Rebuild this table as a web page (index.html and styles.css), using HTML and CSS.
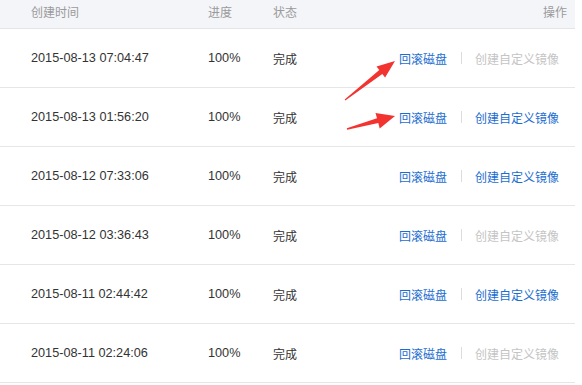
FILE: index.html
```html
<!DOCTYPE html>
<html>
<head>
<meta charset="utf-8">
<link rel="stylesheet" href="styles.css">
</head>
<body>
<div class="wrap">
  <div class="table">
    <div class="row head">
      <div class="c-date">创建时间</div>
      <div class="c-prog">进度</div>
      <div class="c-stat">状态</div>
      <div class="c-act head-act">操作</div>
    </div>
    <div class="row">
      <div class="c-date num">2015-08-13 07:04:47</div>
      <div class="c-prog num">100%</div>
      <div class="c-stat">完成</div>
      <div class="c-act"><a class="link">回滚磁盘</a><span class="sep"></span><a class="link wide off">创建自定义镜像</a></div>
    </div>
    <div class="row">
      <div class="c-date num">2015-08-13 01:56:20</div>
      <div class="c-prog num">100%</div>
      <div class="c-stat">完成</div>
      <div class="c-act"><a class="link">回滚磁盘</a><span class="sep"></span><a class="link wide">创建自定义镜像</a></div>
    </div>
    <div class="row">
      <div class="c-date num">2015-08-12 07:33:06</div>
      <div class="c-prog num">100%</div>
      <div class="c-stat">完成</div>
      <div class="c-act"><a class="link">回滚磁盘</a><span class="sep"></span><a class="link wide">创建自定义镜像</a></div>
    </div>
    <div class="row">
      <div class="c-date num">2015-08-12 03:36:43</div>
      <div class="c-prog num">100%</div>
      <div class="c-stat">完成</div>
      <div class="c-act"><a class="link">回滚磁盘</a><span class="sep"></span><a class="link wide off">创建自定义镜像</a></div>
    </div>
    <div class="row">
      <div class="c-date num">2015-08-11 02:44:42</div>
      <div class="c-prog num">100%</div>
      <div class="c-stat">完成</div>
      <div class="c-act"><a class="link">回滚磁盘</a><span class="sep"></span><a class="link wide">创建自定义镜像</a></div>
    </div>
    <div class="row">
      <div class="c-date num">2015-08-11 02:24:06</div>
      <div class="c-prog num">100%</div>
      <div class="c-stat">完成</div>
      <div class="c-act"><a class="link">回滚磁盘</a><span class="sep"></span><a class="link wide off">创建自定义镜像</a></div>
    </div>
  </div>
  <svg class="arrows" width="582" height="385" viewBox="0 0 582 385">
    <polygon fill="#f2332f" points="344.7,99.6 379.3,70.1 376.5,66.6 395,61 385.1,77.6 382.3,74.1 345.3,100.4"/>
    <polygon fill="#f2332f" points="346.8,128.3 377.0,118.3 375.5,113.0 395,116 379.7,128.4 378.3,123.1 347.2,129.7"/>
  </svg>
</div>
</body>
</html>
```

FILE: styles.css
```css
html, body {
  margin: 0;
  padding: 0;
  background: #ffffff;
}
body {
  font-family: "Liberation Sans", "Noto Sans CJK SC", sans-serif;
  font-size: 12px;
  color: #333333;
}
.wrap {
  position: relative;
  width: 582px;
  height: 385px;
  overflow: hidden;
}
.table {
  width: 575px;
}
.row {
  display: grid;
  grid-template-columns: 208px 65px 1fr auto;
  align-items: center;
  height: 58px;
  border-bottom: 1px solid #e6e6e6;
}
.row.head {
  box-sizing: border-box;
  height: 29px;
  padding-bottom: 5px;
  background: #f4f5f9;
  color: #9a9a9a;
  border-bottom: 1px solid #e3e4e8;
}
.c-date {
  padding-left: 31px;
}
.num {
  font-size: 12.7px;
}
.c-act {
  display: flex;
  align-items: center;
  padding-right: 16px;
}
.head-act {
  padding-right: 8px;
}
.link {
  color: #1c6dd0;
  font-size: 12px;
}
.off {
  color: #c4c4c4;
}
.sep {
  display: inline-block;
  width: 1px;
  height: 12px;
  background: #dcdcdc;
  margin: 0 13px 0 14px;
}
.arrows {
  position: absolute;
  left: 0;
  top: 0;
  pointer-events: none;
}
```
